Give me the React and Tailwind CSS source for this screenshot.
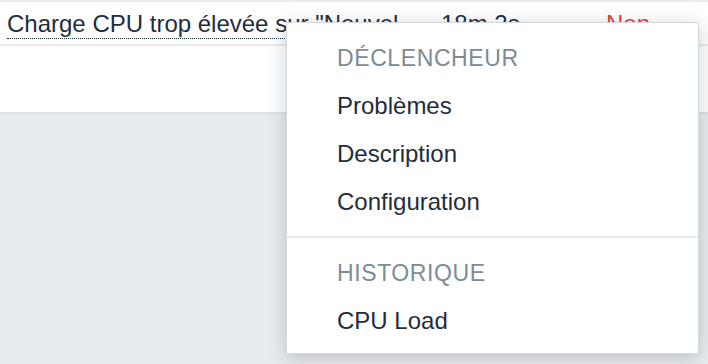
import React from "react";

export default function App() {
  const font = { fontFamily: '"Liberation Sans", Arial, Helvetica, sans-serif' };
  return (
    <div
      className="relative w-full h-[364px] overflow-hidden bg-[#e9ecef] pt-[2px] text-[#1f2d3d]"
      style={font}
    >
      <div className="bg-white">
        <div className="flex h-[44px] border-b-2 border-[#e9ecef] text-[24px]">
          <div className="w-[441px] shrink-0 pl-[7px] pt-[8px]">
            <span className="inline-block max-w-[418px] overflow-hidden text-ellipsis whitespace-nowrap align-top leading-[27px] pb-[1px] border-b border-dotted border-[#1f2d3d]">
              Charge CPU trop élevée sur "Nouvel hôte"
            </span>
          </div>
          <div className="w-[165px] shrink-0 pt-[8px] leading-[27px] whitespace-nowrap">18m 2s</div>
          <div className="pt-[8px] leading-[27px] text-[#d6453d]">Non</div>
        </div>
        <div className="h-[68px] border-b-2 border-[#dde1e5]"></div>
      </div>

      <div className="absolute left-[286px] top-[22px] w-[413px] bg-white border border-[#d3d8dc] shadow-[0_4px_18px_rgba(40,50,60,0.24)] pt-[11px] pb-[8px] text-[24px]">
        <div className="pl-[50px] leading-[48px] text-[23px] uppercase tracking-[0.6px] text-[#7b8c98]">
          Déclencheur
        </div>
        <div className="pl-[50px] leading-[48px]">Problèmes</div>
        <div className="pl-[50px] leading-[48px]">Description</div>
        <div className="pl-[50px] leading-[48px]">Configuration</div>
        <div className="mt-[10px] h-[2px] bg-[#e6e9ec]"></div>
        <div className="mt-[11px] pl-[50px] leading-[48px] text-[23px] uppercase tracking-[0.6px] text-[#7b8c98]">
          Historique
        </div>
        <div className="pl-[50px] leading-[48px]">CPU Load</div>
      </div>
    </div>
  );
}
